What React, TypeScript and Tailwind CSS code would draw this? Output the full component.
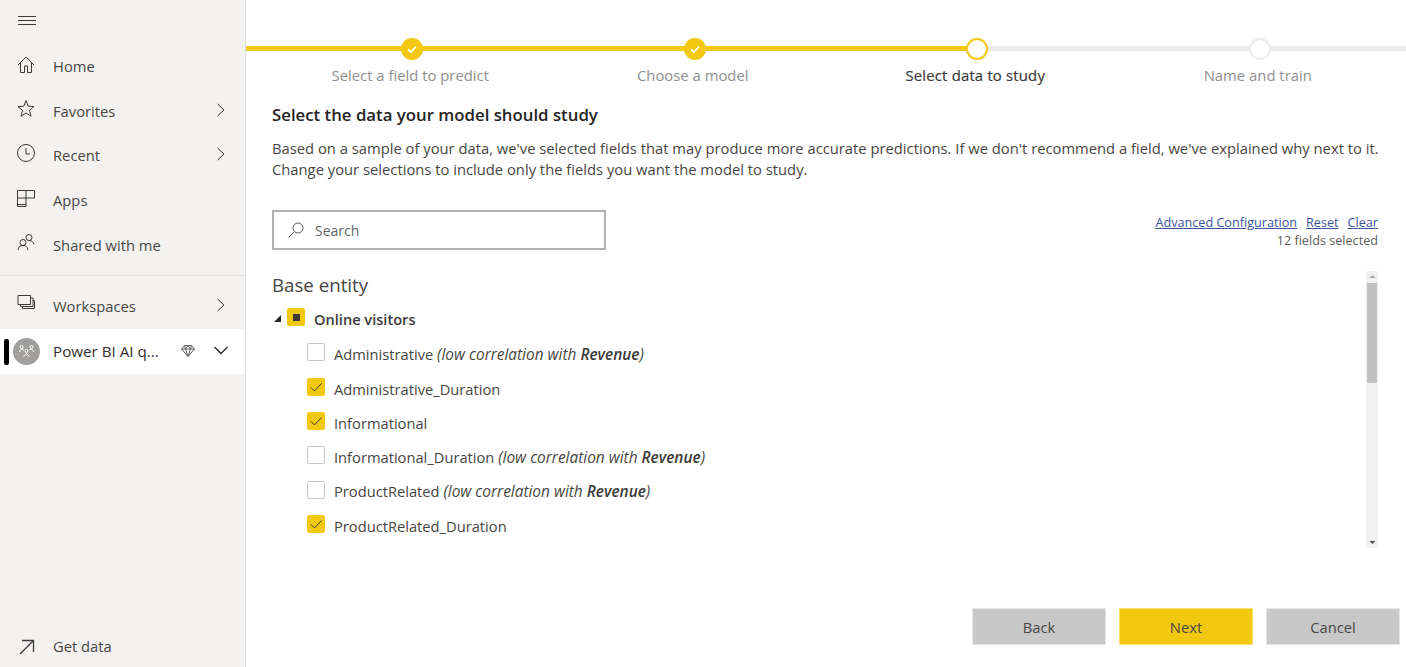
import React from "react";

const S = "#3b3a39";

function Ic({ children, w = 20, h = 20 }: { children: React.ReactNode; w?: number; h?: number }) {
  return (
    <svg width={w} height={h} viewBox={`0 0 ${w} ${h}`} fill="none" stroke={S} strokeWidth="1" className="shrink-0">
      {children}
    </svg>
  );
}

const Chevron = () => (
  <svg width="10" height="14" viewBox="0 0 10 14" fill="none" stroke={S} strokeWidth="1" className="shrink-0 -mt-[2px]">
    <path d="M1.5 1 L8 7 L1.5 13" />
  </svg>
);

function NavItem({ icon, label, chevron }: { icon: React.ReactNode; label: string; chevron?: boolean }) {
  return (
    <div className="h-[44.6px] flex items-center pl-[17px] pr-[19px]">
      <div className="w-[36px] -mt-[3px] flex">{icon}</div>
      <span className="text-[14.75px] text-[#484644] flex-1">{label}</span>
      {chevron && <Chevron />}
    </div>
  );
}

function Check({ on }: { on?: boolean }) {
  return on ? (
    <div className="w-[18px] h-[18px] rounded-[2px] bg-[#f2c811] flex items-center justify-center -mt-[4px]">
      <svg width="14" height="14" viewBox="0 0 14 14" fill="none" stroke="#3b3a39" strokeWidth="1">
        <path d="M2 7.5 L5.5 11 L12.5 3.5" />
      </svg>
    </div>
  ) : (
    <div className="w-[18px] h-[18px] rounded-[2px] bg-white border border-[#c8c6c4] -mt-[4px]" />
  );
}

function Row({ on, name, note }: { on?: boolean; name: string; note?: boolean }) {
  return (
    <div className="h-[34.4px] flex items-center gap-[9px] pl-[35px]">
      <Check on={on} />
      <span className="text-[14.7px] text-[#484644] whitespace-nowrap">
        {name}
        {note && (
          <>
            {" "}
            <i className="text-[15.4px]">
              (low correlation with <b className="font-semibold text-[#3b3a39]">Revenue</b>)
            </i>
          </>
        )}
      </span>
    </div>
  );
}

function Step({ label, state }: { label: string; state: "done" | "current" | "todo" }) {
  const circle =
    state === "done" ? (
      <div className="w-[22px] h-[22px] rounded-full bg-[#f2c811] flex items-center justify-center">
        <svg width="12" height="12" viewBox="0 0 12 12" fill="none" stroke="#fff" strokeWidth="1.7">
          <path d="M2 6.5 L5 9 L10 3.5" />
        </svg>
      </div>
    ) : (
      <div
        className={
          "w-[22px] h-[22px] rounded-full bg-white border-2 " +
          (state === "current" ? "border-[#f2c811]" : "border-[#ebebeb]")
        }
      />
    );
  return (
    <div className="flex flex-col items-center">
      {circle}
      <span
        className={
          "mt-[3px] pr-[4px] text-[14.85px] leading-[24px] whitespace-nowrap " +
          (state === "current" ? "text-[#3b3a39] [-webkit-text-stroke:0.2px_#3b3a39] tracking-[0.2px]" : "text-[#8f8f8f]")
        }
      >
        {label}
      </span>
    </div>
  );
}

function Btn({ label, yellow }: { label: string; yellow?: boolean }) {
  return (
    <button
      className={
        "w-[134px] h-[37px] pt-[1px] text-[14.75px] text-[#484644] border border-[#e6e6e6] " +
        (yellow ? "bg-[#f2c811] border-[#f8e071]" : "bg-[#c8c8c8]")
      }
    >
      {label}
    </button>
  );
}

export default function App() {
  return (
    <div
      className="w-[1406px] h-[667px] flex overflow-hidden bg-white"
      style={{ fontFamily: '"Open Sans", "Noto Sans", sans-serif' }}
    >
      <aside className="w-[246px] shrink-0 bg-[#f3f2f1] border-r border-[#e1dfdd] flex flex-col">
        <div className="h-[44px] pl-[18px] pt-[16px]">
          <svg width="18" height="9" viewBox="0 0 18 9" stroke={S} strokeWidth="1">
            <path d="M0 .5H18M0 4.5H18M0 8.5H18" />
          </svg>
        </div>
        <NavItem
          label="Home"
          icon={
            <Ic>
              <path d="M1 10 L9 2 L17 10 M3.5 8 V17.5 H7.5 V11 H10.5 V17.5 H14.5 V8" />
            </Ic>
          }
        />
        <NavItem
          label="Favorites"
          chevron
          icon={
            <Ic>
              <path d="M9 1.5 L11.2 7.2 L17 7.6 L12.5 11.4 L14 17.2 L9 14 L4 17.2 L5.5 11.4 L1 7.6 L6.8 7.2 Z" />
            </Ic>
          }
        />
        <NavItem
          label="Recent"
          chevron
          icon={
            <Ic>
              <circle cx="9" cy="9" r="8.5" />
              <path d="M9 4 V10 H13" />
            </Ic>
          }
        />
        <NavItem
          label="Apps"
          icon={
            <Ic>
              <path d="M.5 1.5 H17.5 V9 H9 V17.5 H.5 Z M9 1.5 V9 M.5 9 H9 M.5 15.5 H9" />
            </Ic>
          }
        />
        <NavItem
          label="Shared with me"
          icon={
            <Ic>
              <circle cx="12" cy="4.5" r="3" />
              <circle cx="6" cy="9.5" r="3" />
              <path d="M1 17 C1.5 13.5 3.5 12.5 6 12.5 C8.5 12.5 10.5 13.5 11 17 M12 7.5 C14.5 7.5 16.5 8.5 17 11.5" />
            </Ic>
          }
        />
        <div className="h-px bg-[#e1dfdd] mt-[8px] mb-[8px]" />
        <NavItem
          label="Workspaces"
          chevron
          icon={
            <Ic>
              <path d="M1 .5 H13.5 V9.5 H1 Z M13.5 3 H16 V11.5 H3.5 V9.5 M16 5.5 H17.5 V13.5 H5.5 V11.5" />
            </Ic>
          }
        />
        <div className="h-[45px] bg-white flex items-center relative pl-[13px] pr-[17px]">
          <div className="absolute left-[4px] top-[10px] w-[5px] h-[26px] rounded-[2px] bg-black" />
          <div className="w-[27px] h-[27px] rounded-full bg-[#a19f9d] flex items-center justify-center shrink-0">
            <svg width="17" height="14" viewBox="0 0 17 14" fill="none" stroke="#fff" strokeWidth="1">
              <circle cx="3.5" cy="3" r="1.5" />
              <circle cx="13.5" cy="3" r="1.5" />
              <circle cx="8.5" cy="7" r="1.5" />
              <path d="M1 8 L3.5 5 L6 6 M16 8 L13.5 5 L11 6 M5.5 13 L8.5 9.5 L11.5 13" />
            </svg>
          </div>
          <span className="ml-[13px] text-[15.2px] text-[#323130] whitespace-nowrap w-[128px]">Power BI AI q...</span>
          <svg width="14" height="12" viewBox="0 0 14 12" fill="none" stroke="#605e5c" strokeWidth="1" className="shrink-0">
            <path d="M3.5 .5 H10.5 L13.5 4 L7 11.5 L.5 4 Z M.5 4 H13.5 M4.5 4 L7 11.5 L9.5 4 M3.5 .5 L4.5 4 L7 .5 L9.5 4 L10.5 .5" />
          </svg>
          <svg width="14" height="9" viewBox="0 0 14 9" fill="none" stroke="#252423" strokeWidth="1.3" className="ml-[19px] shrink-0 -mt-[2px]">
            <path d="M.5 1 L7 7.5 L13.5 1" />
          </svg>
        </div>
        <div className="flex-1" />
        <div className="h-[41px] flex items-center pl-[19px]">
          <div className="w-[34px] flex">
            <svg width="16" height="16" viewBox="0 0 16 16" fill="none" stroke={S} strokeWidth="1.3">
              <path d="M1 15 L14.5 1.5 M3 1.5 H14.5 V13" />
            </svg>
          </div>
          <span className="text-[14.75px] text-[#484644]">Get data</span>
        </div>
      </aside>

      <main className="flex-1 min-w-0 flex flex-col">
        <div className="relative h-[98px] pt-[38px]">
          <div className="absolute left-0 right-0 top-[46px] h-[5px] bg-[#ebebeb]" />
          <div className="absolute left-0 w-[731px] top-[46px] h-[5px] bg-[#f2c811]" />
          <div className="relative grid grid-cols-4 ml-[25px] mr-[5px]">
            <Step label="Select a field to predict" state="done" />
            <Step label="Choose a model" state="done" />
            <Step label="Select data to study" state="current" />
            <Step label="Name and train" state="todo" />
          </div>
        </div>

        <div className="pl-[26px] pr-[28px] flex-1 flex flex-col">
          <h1 className="text-[16.8px] leading-[24px] mt-[5px] font-semibold text-[#252423] whitespace-nowrap">
            Select the data your model should study
          </h1>
          <p className="mt-[11px] text-[14.78px] leading-[21px] text-[#484644] whitespace-nowrap">
            Based on a sample of your data, we've selected fields that may produce more accurate predictions. If we don't recommend a field, we've explained why next to it.
            <br />
            Change your selections to include only the fields you want the model to study.
          </p>
          <div className="mt-[30px] flex items-start justify-between">
            <div className="w-[334px] h-[40px] border-2 border-[#b0b0b0] flex items-center pl-[13px]">
              <svg width="18" height="18" viewBox="0 0 18 18" fill="none" stroke="#605e5c" strokeWidth="1">
                <circle cx="11" cy="7" r="5" />
                <path d="M7.5 10.5 L1.5 16.5" />
              </svg>
              <span className="ml-[10px] text-[14px] text-[#666666]">Search</span>
            </div>
            <div className="flex flex-col items-end text-[12.65px] leading-[18px] pt-[3px]">
              <div className="flex gap-[9px] text-[#3a539b] underline">
                <span>Advanced Configuration</span>
                <span>Reset</span>
                <span>Clear</span>
              </div>
              <span className="text-[#605e5c]">12 fields selected</span>
            </div>
          </div>
          <div className="mt-[21px] flex">
            <div className="flex-1">
              <div className="text-[18.7px] leading-[28px] text-[#484644]">Base entity</div>
              <div className="h-[35px] mt-[3px] flex items-center relative">
                <svg width="9" height="9" viewBox="0 0 9 9" className="ml-[1px] -mt-[3px] shrink-0">
                  <path d="M8 1 V8 H1 Z" fill="#252423" />
                </svg>
                <div className="ml-[5px] w-[18px] h-[18px] rounded-[2px] bg-[#f2c811] flex items-center justify-center -mt-[5px]">
                  <div className="w-[7px] h-[7px] bg-[#3b3a39]" />
                </div>
                <span className="ml-[9px] pt-[1px] text-[14.6px] font-semibold text-[#3b3a39]">Online visitors</span>
              </div>
              <Row name="Administrative" note />
              <Row name="Administrative_Duration" on />
              <Row name="Informational" on />
              <Row name="Informational_Duration" note />
              <Row name="ProductRelated" note />
              <Row name="ProductRelated_Duration" on />
            </div>
            <div className="w-[12px] h-[277px] bg-[#f1f1f1] flex flex-col items-center shrink-0">
              <svg width="7" height="12" viewBox="0 0 7 12" className="shrink-0">
                <path d="M.5 7 L3.5 4 L6.5 7 Z" fill="#a6a6a6" />
              </svg>
              <div className="w-[10px] h-[100px] bg-[#c1c1c1]" />
              <div className="flex-1" />
              <svg width="7" height="12" viewBox="0 0 7 12" className="shrink-0">
                <path d="M.5 5 L3.5 8 L6.5 5 Z" fill="#505050" />
              </svg>
            </div>
          </div>
          <div className="flex-1" />
        </div>
        <div className="flex justify-end gap-[13px] pr-[6px] pb-[22px]">
          <Btn label="Back" />
          <Btn label="Next" yellow />
          <Btn label="Cancel" />
        </div>
      </main>
    </div>
  );
}
